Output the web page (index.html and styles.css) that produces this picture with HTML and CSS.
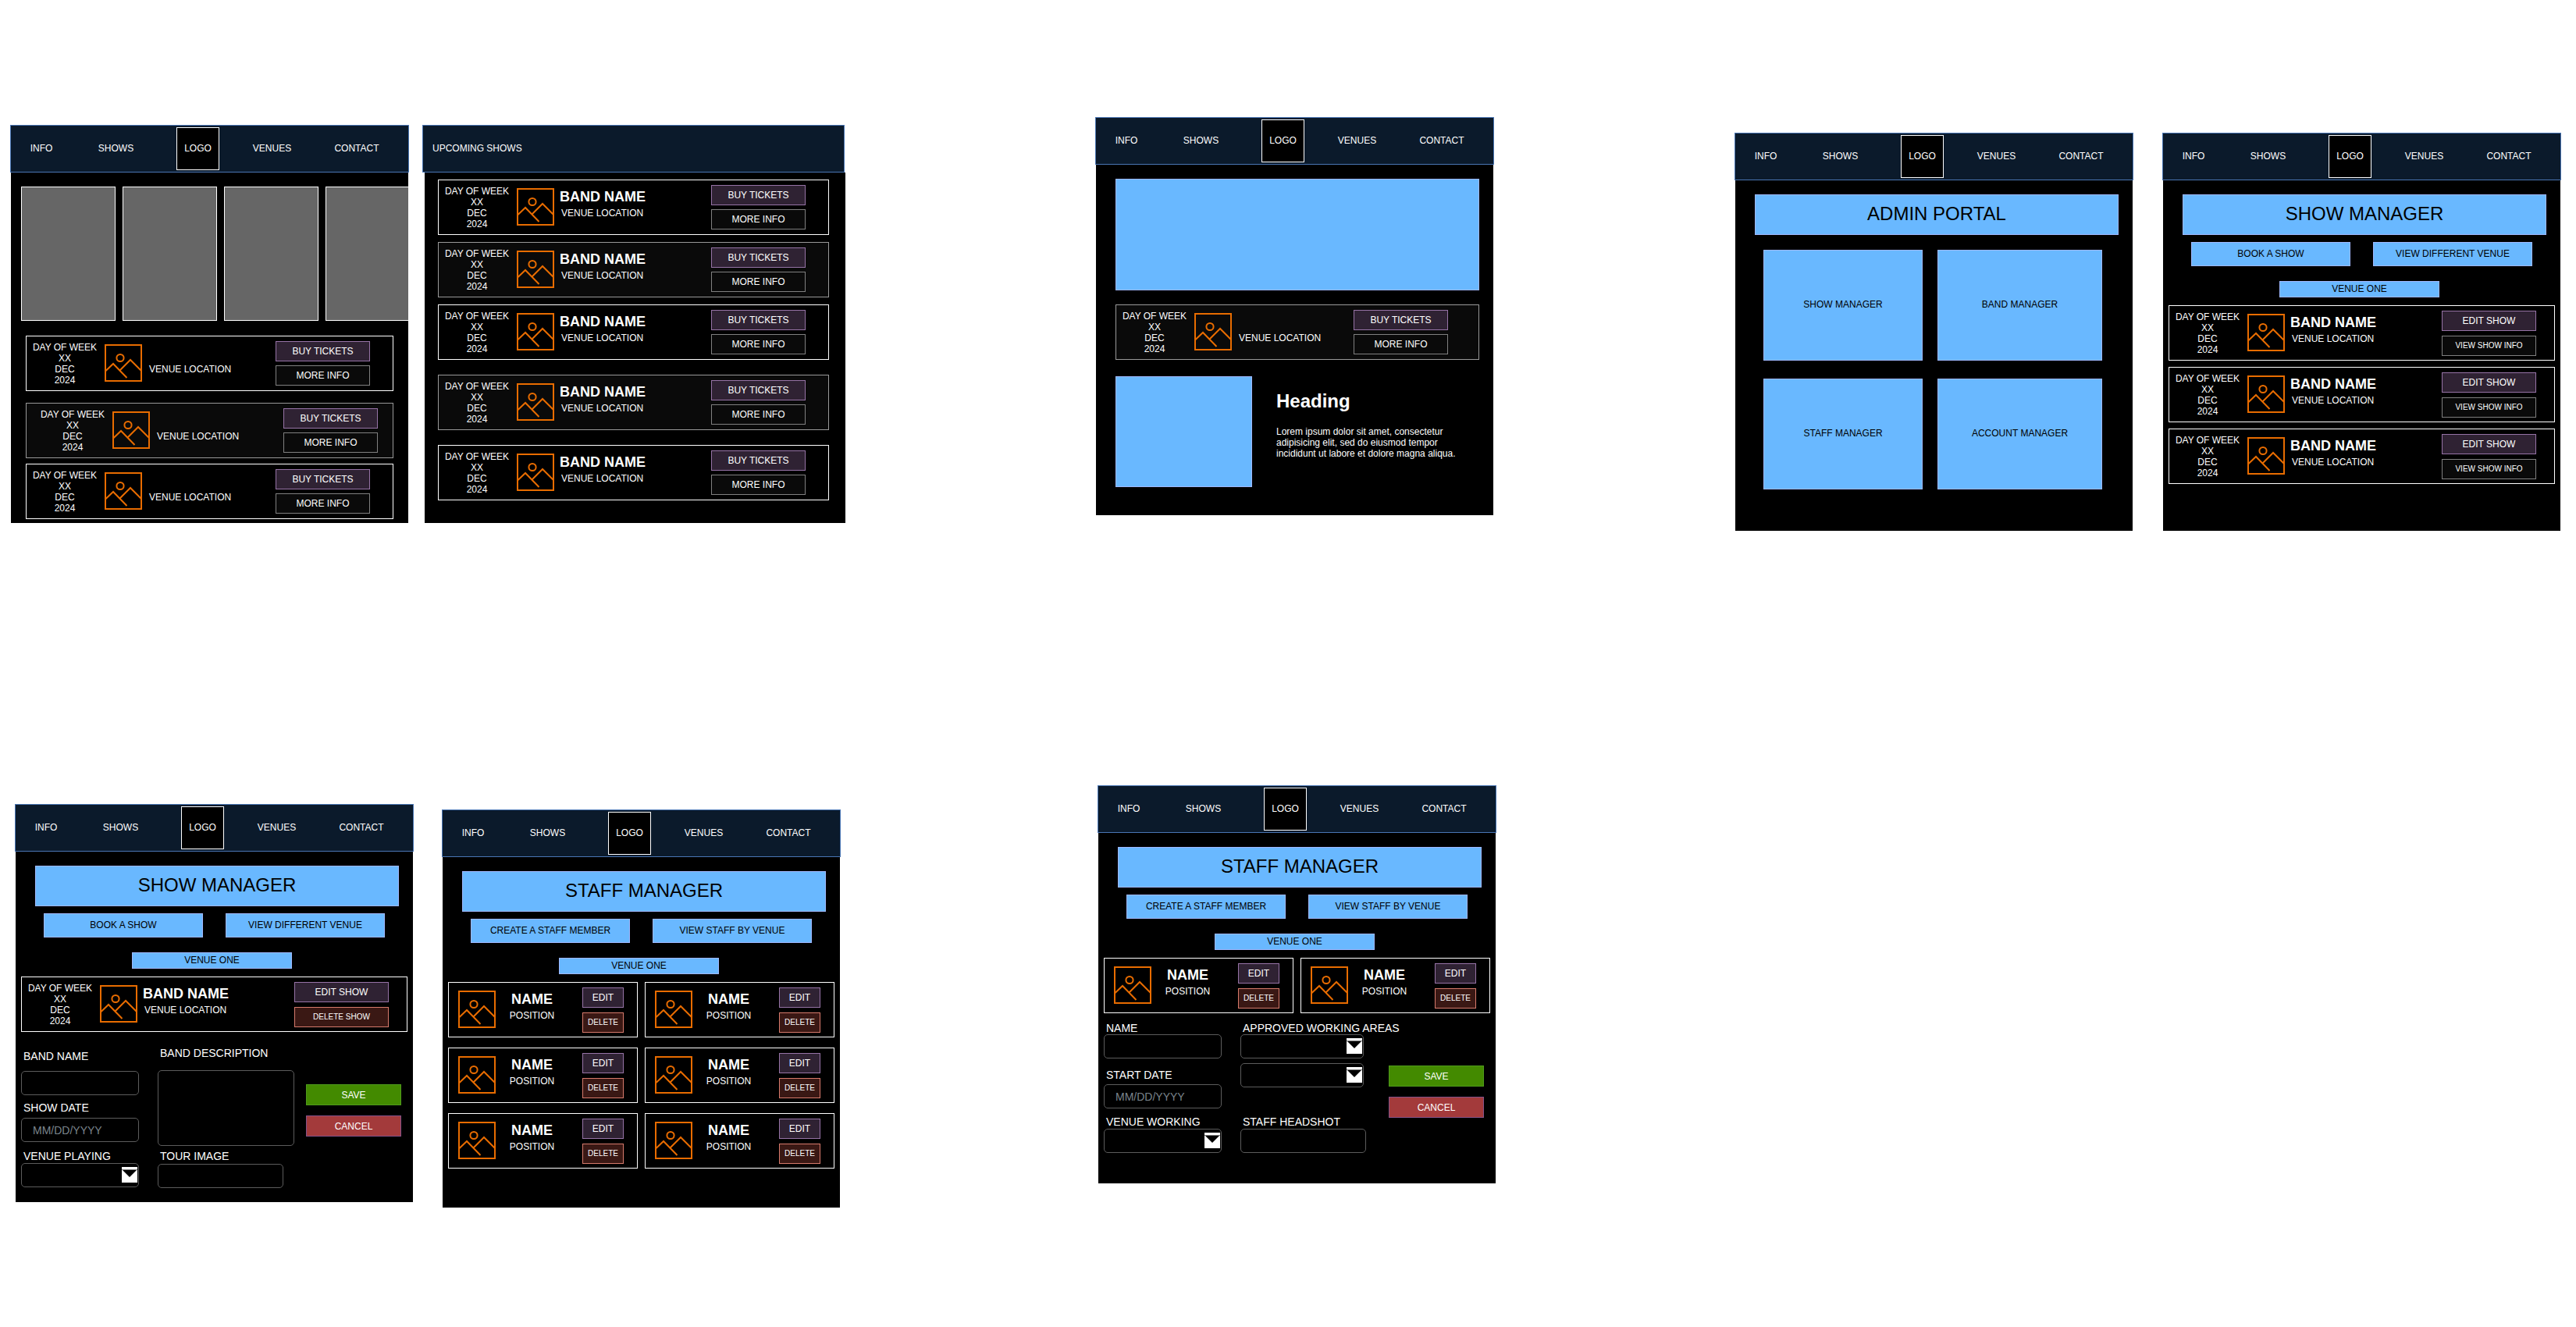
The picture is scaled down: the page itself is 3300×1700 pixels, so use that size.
FILE: index.html
```html
<!DOCTYPE html>
<html lang="en">
<head>
<meta charset="utf-8">
<title>Venue site wireframes</title>
<link rel="stylesheet" href="styles.css">
</head>
<body>
<svg class="sprite" aria-hidden="true">
  <symbol id="picture" viewBox="0 0 48 48">
    <g fill="none" stroke="#e86c00" stroke-width="2">
      <rect x="1" y="1" width="46" height="46"/>
      <circle cx="20" cy="17.500" r="4.600"/>
      <path d="M1 34.500 11 25 28.500 43M20 33 33 20 47 34"/>
    </g>
  </symbol>
  <symbol id="arrow" viewBox="0 0 20 20">
    <path fill="#fff" d="M0 0h20v20H0z"/>
    <path fill="#777" d="M0 3h20v1H0z"/>
    <path fill="#000" d="M1 4h18l-9 9z"/>
  </symbol>
</svg>

<main>
<div class="row row-top">

  <section class="board board-home">
    <nav class="nav"><a href="#">INFO</a><a href="#">SHOWS</a><a class="logo" href="#">LOGO</a><a href="#">VENUES</a><a href="#">CONTACT</a></nav>
    <div class="screen home">
      <div class="posters"><div class="poster"></div><div class="poster"></div><div class="poster"></div><div class="poster"></div></div>
      <article class="show first">
        <p class="date">DAY OF WEEK<br>XX<br>DEC<br>2024</p>
        <svg class="thumb"><use href="#picture"/></svg>
        <div class="info solo"><p class="place">VENUE LOCATION</p></div>
        <div class="actions"><button class="btn buy">BUY TICKETS</button><button class="btn more">MORE INFO</button></div>
      </article>
      <article class="show dim second">
        <p class="date">DAY OF WEEK<br>XX<br>DEC<br>2024</p>
        <svg class="thumb"><use href="#picture"/></svg>
        <div class="info solo"><p class="place">VENUE LOCATION</p></div>
        <div class="actions"><button class="btn buy">BUY TICKETS</button><button class="btn more">MORE INFO</button></div>
      </article>
      <article class="show">
        <p class="date">DAY OF WEEK<br>XX<br>DEC<br>2024</p>
        <svg class="thumb"><use href="#picture"/></svg>
        <div class="info solo"><p class="place">VENUE LOCATION</p></div>
        <div class="actions"><button class="btn buy">BUY TICKETS</button><button class="btn more">MORE INFO</button></div>
      </article>
    </div>
  </section>

  <section class="board board-upcoming">
    <header class="nav nav-title"><h2>UPCOMING SHOWS</h2></header>
    <div class="screen upcoming">
      <article class="show">
        <p class="date">DAY OF WEEK<br>XX<br>DEC<br>2024</p>
        <svg class="thumb"><use href="#picture"/></svg>
        <div class="info"><h3>BAND NAME</h3><p class="place">VENUE LOCATION</p></div>
        <div class="actions"><button class="btn buy">BUY TICKETS</button><button class="btn more">MORE INFO</button></div>
      </article>
      <article class="show dim">
        <p class="date">DAY OF WEEK<br>XX<br>DEC<br>2024</p>
        <svg class="thumb"><use href="#picture"/></svg>
        <div class="info"><h3>BAND NAME</h3><p class="place">VENUE LOCATION</p></div>
        <div class="actions"><button class="btn buy">BUY TICKETS</button><button class="btn more">MORE INFO</button></div>
      </article>
      <article class="show">
        <p class="date">DAY OF WEEK<br>XX<br>DEC<br>2024</p>
        <svg class="thumb"><use href="#picture"/></svg>
        <div class="info"><h3>BAND NAME</h3><p class="place">VENUE LOCATION</p></div>
        <div class="actions"><button class="btn buy">BUY TICKETS</button><button class="btn more">MORE INFO</button></div>
      </article>
      <article class="show dim spaced">
        <p class="date">DAY OF WEEK<br>XX<br>DEC<br>2024</p>
        <svg class="thumb"><use href="#picture"/></svg>
        <div class="info"><h3>BAND NAME</h3><p class="place">VENUE LOCATION</p></div>
        <div class="actions"><button class="btn buy">BUY TICKETS</button><button class="btn more">MORE INFO</button></div>
      </article>
      <article class="show spaced">
        <p class="date">DAY OF WEEK<br>XX<br>DEC<br>2024</p>
        <svg class="thumb"><use href="#picture"/></svg>
        <div class="info"><h3>BAND NAME</h3><p class="place">VENUE LOCATION</p></div>
        <div class="actions"><button class="btn buy">BUY TICKETS</button><button class="btn more">MORE INFO</button></div>
      </article>
    </div>
  </section>

  <section class="board board-detail">
    <nav class="nav"><a href="#">INFO</a><a href="#">SHOWS</a><a class="logo" href="#">LOGO</a><a href="#">VENUES</a><a href="#">CONTACT</a></nav>
    <div class="screen detail">
      <div class="panel hero"></div>
      <article class="show dim">
        <p class="date">DAY OF WEEK<br>XX<br>DEC<br>2024</p>
        <svg class="thumb"><use href="#picture"/></svg>
        <div class="info solo"><p class="place">VENUE LOCATION</p></div>
        <div class="actions"><button class="btn buy">BUY TICKETS</button><button class="btn more">MORE INFO</button></div>
      </article>
      <div class="feature">
        <div class="panel photo"></div>
        <div class="copy">
          <h2>Heading</h2>
          <p>Lorem ipsum dolor sit amet, consectetur adipisicing elit, sed do eiusmod tempor incididunt ut labore et dolore magna aliqua.</p>
        </div>
      </div>
    </div>
  </section>

  <section class="board board-admin">
    <nav class="nav"><a href="#">INFO</a><a href="#">SHOWS</a><a class="logo" href="#">LOGO</a><a href="#">VENUES</a><a href="#">CONTACT</a></nav>
    <div class="screen">
      <h1 class="panel title">ADMIN PORTAL</h1>
      <div class="tiles">
        <button class="panel">SHOW MANAGER</button><button class="panel">BAND MANAGER</button>
        <button class="panel">STAFF MANAGER</button><button class="panel">ACCOUNT MANAGER</button>
      </div>
    </div>
  </section>

  <section class="board board-shows">
    <nav class="nav"><a href="#">INFO</a><a href="#">SHOWS</a><a class="logo" href="#">LOGO</a><a href="#">VENUES</a><a href="#">CONTACT</a></nav>
    <div class="screen">
      <h1 class="panel title">SHOW MANAGER</h1>
      <div class="choices"><button class="panel">BOOK A SHOW</button><button class="panel">VIEW DIFFERENT VENUE</button></div>
      <h2 class="panel venue">VENUE ONE</h2>
      <div class="managed">
        <article class="show">
          <p class="date">DAY OF WEEK<br>XX<br>DEC<br>2024</p>
          <svg class="thumb"><use href="#picture"/></svg>
          <div class="info"><h3>BAND NAME</h3><p class="place">VENUE LOCATION</p></div>
          <div class="actions"><button class="btn buy">EDIT SHOW</button><button class="btn more small">VIEW SHOW INFO</button></div>
        </article>
        <article class="show">
          <p class="date">DAY OF WEEK<br>XX<br>DEC<br>2024</p>
          <svg class="thumb"><use href="#picture"/></svg>
          <div class="info"><h3>BAND NAME</h3><p class="place">VENUE LOCATION</p></div>
          <div class="actions"><button class="btn buy">EDIT SHOW</button><button class="btn more small">VIEW SHOW INFO</button></div>
        </article>
        <article class="show">
          <p class="date">DAY OF WEEK<br>XX<br>DEC<br>2024</p>
          <svg class="thumb"><use href="#picture"/></svg>
          <div class="info"><h3>BAND NAME</h3><p class="place">VENUE LOCATION</p></div>
          <div class="actions"><button class="btn buy">EDIT SHOW</button><button class="btn more small">VIEW SHOW INFO</button></div>
        </article>
      </div>
    </div>
  </section>
</div>

<div class="row row-bottom">

  <section class="board board-edit-show">
    <nav class="nav"><a href="#">INFO</a><a href="#">SHOWS</a><a class="logo" href="#">LOGO</a><a href="#">VENUES</a><a href="#">CONTACT</a></nav>
    <div class="screen">
      <h1 class="panel title">SHOW MANAGER</h1>
      <div class="choices"><button class="panel">BOOK A SHOW</button><button class="panel">VIEW DIFFERENT VENUE</button></div>
      <h2 class="panel venue">VENUE ONE</h2>
      <div class="managed">
        <article class="show">
          <p class="date">DAY OF WEEK<br>XX<br>DEC<br>2024</p>
          <svg class="thumb"><use href="#picture"/></svg>
          <div class="info"><h3>BAND NAME</h3><p class="place">VENUE LOCATION</p></div>
          <div class="actions"><button class="btn buy">EDIT SHOW</button><button class="btn delete small">DELETE SHOW</button></div>
        </article>
      </div>
      <form class="form show-form">
        <div class="col">
          <label for="band">BAND NAME</label>
          <input id="band" type="text">
          <label for="show-date">SHOW DATE</label>
          <input id="show-date" type="text" placeholder="MM/DD/YYYY">
          <label for="playing">VENUE PLAYING</label>
          <div class="pick"><select id="playing"><option></option></select><svg><use href="#arrow"/></svg></div>
        </div>
        <div class="col about">
          <label for="about">BAND DESCRIPTION</label>
          <textarea id="about"></textarea>
          <label for="tour">TOUR IMAGE</label>
          <input id="tour" class="upload" type="text">
        </div>
        <div class="decide"><button class="btn save" type="button">SAVE</button><button class="btn cancel" type="button">CANCEL</button></div>
      </form>
    </div>
  </section>

  <section class="board board-staff">
    <nav class="nav"><a href="#">INFO</a><a href="#">SHOWS</a><a class="logo" href="#">LOGO</a><a href="#">VENUES</a><a href="#">CONTACT</a></nav>
    <div class="screen">
      <h1 class="panel title">STAFF MANAGER</h1>
      <div class="choices"><button class="panel">CREATE A STAFF MEMBER</button><button class="panel">VIEW STAFF BY VENUE</button></div>
      <h2 class="panel venue">VENUE ONE</h2>
      <div class="staff">
        <article class="show person">
          <svg class="thumb"><use href="#picture"/></svg>
          <div class="info"><h3>NAME</h3><p class="place">POSITION</p></div>
          <div class="actions"><button class="btn buy">EDIT</button><button class="btn delete small">DELETE</button></div>
        </article>
        <article class="show person">
          <svg class="thumb"><use href="#picture"/></svg>
          <div class="info"><h3>NAME</h3><p class="place">POSITION</p></div>
          <div class="actions"><button class="btn buy">EDIT</button><button class="btn delete small">DELETE</button></div>
        </article>
        <article class="show person">
          <svg class="thumb"><use href="#picture"/></svg>
          <div class="info"><h3>NAME</h3><p class="place">POSITION</p></div>
          <div class="actions"><button class="btn buy">EDIT</button><button class="btn delete small">DELETE</button></div>
        </article>
        <article class="show person">
          <svg class="thumb"><use href="#picture"/></svg>
          <div class="info"><h3>NAME</h3><p class="place">POSITION</p></div>
          <div class="actions"><button class="btn buy">EDIT</button><button class="btn delete small">DELETE</button></div>
        </article>
        <article class="show person">
          <svg class="thumb"><use href="#picture"/></svg>
          <div class="info"><h3>NAME</h3><p class="place">POSITION</p></div>
          <div class="actions"><button class="btn buy">EDIT</button><button class="btn delete small">DELETE</button></div>
        </article>
        <article class="show person">
          <svg class="thumb"><use href="#picture"/></svg>
          <div class="info"><h3>NAME</h3><p class="place">POSITION</p></div>
          <div class="actions"><button class="btn buy">EDIT</button><button class="btn delete small">DELETE</button></div>
        </article>
      </div>
    </div>
  </section>

  <section class="board board-edit-staff">
    <nav class="nav"><a href="#">INFO</a><a href="#">SHOWS</a><a class="logo" href="#">LOGO</a><a href="#">VENUES</a><a href="#">CONTACT</a></nav>
    <div class="screen">
      <h1 class="panel title">STAFF MANAGER</h1>
      <div class="choices"><button class="panel">CREATE A STAFF MEMBER</button><button class="panel">VIEW STAFF BY VENUE</button></div>
      <h2 class="panel venue">VENUE ONE</h2>
      <div class="staff">
        <article class="show person">
          <svg class="thumb"><use href="#picture"/></svg>
          <div class="info"><h3>NAME</h3><p class="place">POSITION</p></div>
          <div class="actions"><button class="btn buy">EDIT</button><button class="btn delete small">DELETE</button></div>
        </article>
        <article class="show person">
          <svg class="thumb"><use href="#picture"/></svg>
          <div class="info"><h3>NAME</h3><p class="place">POSITION</p></div>
          <div class="actions"><button class="btn buy">EDIT</button><button class="btn delete small">DELETE</button></div>
        </article>
      </div>
      <form class="form staff-form">
        <div class="col">
          <label for="person">NAME</label>
          <input id="person" type="text">
          <label for="start" class="start">START DATE</label>
          <input id="start" class="start" type="text" placeholder="MM/DD/YYYY">
          <label for="working">VENUE WORKING</label>
          <div class="pick"><select id="working"><option></option></select><svg><use href="#arrow"/></svg></div>
        </div>
        <div class="col areas">
          <label for="area">APPROVED WORKING AREAS</label>
          <div class="pick"><select id="area"><option></option></select><svg><use href="#arrow"/></svg></div>
          <div class="pick next"><select aria-label="Second working area"><option></option></select><svg><use href="#arrow"/></svg></div>
          <label for="headshot" class="headshot">STAFF HEADSHOT</label>
          <input id="headshot" class="upload" type="text">
        </div>
        <div class="decide"><button class="btn save" type="button">SAVE</button><button class="btn cancel" type="button">CANCEL</button></div>
      </form>
    </div>
  </section>
</div>
</main>
</body>
</html>
```
FILE: styles.css
```css
* { box-sizing: border-box; }

body {
  margin: 0;
  background: #fff;
  color: #fff;
  font: 12px/14px "Liberation Sans", Arial, sans-serif;
}

h1, h2, h3, p { margin: 0; font: inherit; }

button, input, select, textarea {
  margin: 0;
  padding: 0;
  font: inherit;
  color: inherit;
}

a { color: inherit; text-decoration: none; }

.sprite { position: absolute; width: 0; height: 0; }

/* Canvas rows: each board sits in its own track, the others are gutters */
.row { display: grid; align-items: start; }

.row-top {
  padding-top: 150px;
  grid-template-columns:
    minmax(0, 13fr) minmax(0, 511fr) minmax(0, 17fr) minmax(0, 542fr)
    minmax(0, 320fr) minmax(0, 511fr) minmax(0, 308fr) minmax(0, 511fr)
    minmax(0, 37fr) minmax(0, 511fr) minmax(0, 19fr);
}

.row-bottom {
  padding-top: 326px;
  grid-template-columns:
    minmax(0, 19fr) minmax(0, 511fr) minmax(0, 36fr) minmax(0, 511fr)
    minmax(0, 329fr) minmax(0, 511fr) minmax(0, 1383fr);
}

.board { display: flex; flex-direction: column; min-height: 510px; }
.board-home { grid-column: 2; margin-top: 10px; }
.board-upcoming { grid-column: 4; margin-top: 10px; }
.board-detail { grid-column: 6; }
.board-admin { grid-column: 8; margin-top: 20px; }
.board-shows { grid-column: 10; margin-top: 20px; }
.board-edit-show { grid-column: 2; margin-top: 24px; }
.board-staff { grid-column: 4; margin-top: 31px; }
.board-edit-staff { grid-column: 6; }

/* Top bar */
.nav {
  display: grid;
  grid-template-columns: 78fr 113fr 97fr 93fr 124fr 4fr;
  place-items: center;
  height: 61px;
  background: #0b1a2b;
  border: 1px solid #4a76b4;
}

.nav a, .nav h2 { padding-bottom: 2px; }

.logo {
  display: grid;
  place-items: center;
  width: 55px;
  height: 55px;
  background: #000;
  border: 1px solid #fff;
}

.nav-title {
  grid-template-columns: 1fr;
  justify-items: start;
  margin-right: 1px;
  padding-left: 12px;
}

.screen { flex: 1; margin: 0 1px; background: #000; overflow: hidden; }

/* Show cards */
.show {
  --right: 29px;
  --stack: 5px;
  display: flex;
  align-items: flex-start;
  height: 71px;
  border: 1px solid #fff;
}

.dim { background: #0a0a0a; border-color: #999; }
.date { width: 98px; margin: 7px 2px 0 0; text-align: center; }
.thumb { flex: none; width: 48px; height: 48px; margin-top: 10px; }
.info { margin: 10px 0 0 7px; white-space: nowrap; }
.info h3 { font-size: 18px; font-weight: bold; line-height: 22px; }
.place { margin: 3px 0 0 2px; }
.solo { padding-top: 22px; }

.actions {
  display: grid;
  gap: var(--stack);
  width: 121px;
  margin: 6px var(--right) 0 auto;
}

.btn {
  display: grid;
  place-items: center;
  height: 26px;
  border: 1px solid;
  white-space: nowrap;
}

.buy { background: #2f2233; border-color: #9673a6; }
.more { background: #0a0a0a; border-color: #808080; }
.delete { background: #3a1814; border-color: #d77a6c; }
.save { background: #438a00; border-color: #4f9a1c; }
.cancel { background: #a33a3b; border-color: #85538a; }
.small { font-size: 10px; }

/* Blue panels */
.panel {
  display: grid;
  place-items: center;
  padding-bottom: 2px;
  background: #69b8ff;
  border: 1px solid #9fb8ff;
  color: #000;
}

.title { height: 52px; margin: 18px 18px 0 25px; font-size: 24px; line-height: 28px; }

/* Home */
.posters { display: flex; gap: 9px; margin: 18px 0 19px 13px; }
.poster { flex: 0 0 121px; height: 172px; background: #666; border: 1px solid #fff; }
.home .show { margin: 0 19px 5px; }
.home .first { margin-bottom: 15px; }
.home .second { --right: 19px; margin-bottom: 7px; padding-left: 10px; }

/* Upcoming */
.upcoming { margin: 0 0 0 3px; }
.upcoming .show { margin: 9px 21px 0 17px; }
.upcoming .spaced { margin-top: 19px; }

/* Detail */
.detail { padding: 18px 18px 0 25px; }
.hero { height: 143px; margin-bottom: 18px; }
.detail .show { --right: 39px; }
.feature { display: flex; gap: 31px; margin-top: 21px; }
.photo { flex: none; width: 175px; height: 142px; }
.copy { padding-top: 18px; }
.copy h2 { font-size: 24px; font-weight: bold; line-height: 28px; }
.copy p { max-width: 240px; margin-top: 18px; }

/* Managers */
.tiles {
  display: grid;
  grid-template-columns: 204fr 211fr;
  grid-auto-rows: 142px;
  gap: 23px 19px;
  margin: 19px 39px 0 36px;
}

.choices {
  display: grid;
  grid-template-columns: 1fr 1fr;
  grid-auto-rows: 31px;
  gap: 29px;
  margin: 9px 36px 19px;
}

.venue { height: 21px; margin: 0 155px 10px 149px; }
.managed { display: grid; gap: 8px; margin: 0 7px; }
.managed .show { --right: 23px; --stack: 6px; }

.staff {
  display: grid;
  grid-template-columns: 1fr 1fr;
  gap: 13px 9px;
  margin: 0 7px;
}

.person { --right: 17px; --stack: 6px; padding-left: 12px; }
.person .info { width: 93px; margin-left: 0; text-align: center; }
.person .place { margin-left: 0; }
.person .actions { width: 53px; }

/* Forms */
.form {
  display: grid;
  grid-template-columns:
    minmax(0, 151fr) minmax(0, 24fr) minmax(0, 175fr) minmax(0, 15fr) minmax(0, 122fr);
  align-items: start;
  margin: 0 15px 0 7px;
}

.col { display: flex; flex-direction: column; grid-column: 1; }
.col + .col { grid-column: 3; }
.decide { display: grid; gap: 13px; grid-column: 5; }
.decide .btn { height: 27px; }

label {
  padding-left: 3px;
  font-size: 14px;
  line-height: 16px;
  white-space: nowrap;
}

input, select, textarea {
  width: 100%;
  height: 31px;
  background: #000;
  border: 1px solid #5c5c5c;
  border-radius: 5px;
  font-size: 14px;
}

input { padding: 0 14px; }
input::placeholder { color: #7b858d; opacity: 1; }
textarea { display: block; height: 97px; resize: none; }
select { display: block; appearance: none; }
.upload { width: 161px; }

.pick { position: relative; }
.pick svg { position: absolute; top: 5px; right: 2px; width: 20px; height: 20px; }

.show-form .col { padding-top: 23px; }
.show-form input { margin: 5px 0 8px; }
.show-form #band { margin-top: 11px; }
.show-form #show-date { margin-bottom: 10px; }
.show-form .about { padding-top: 19px; }
.show-form textarea { margin: 14px 0 5px; }
.show-form .upload { margin: 2px 0 0; }
.show-form .pick { margin-top: 1px; }
.show-form .decide { padding-top: 67px; }

.staff-form .col { padding-top: 11px; }
.staff-form .start { margin-top: 13px; }
.staff-form input.start { margin: 4px 0 9px; }
.staff-form .pick { margin-top: 1px; }
.staff-form .areas .pick { width: 158px; margin: 0; }
.staff-form .areas .next { margin: 6px 0 36px; }
.staff-form .headshot { margin-bottom: 1px; }
.staff-form .decide { padding-top: 67px; }
```
